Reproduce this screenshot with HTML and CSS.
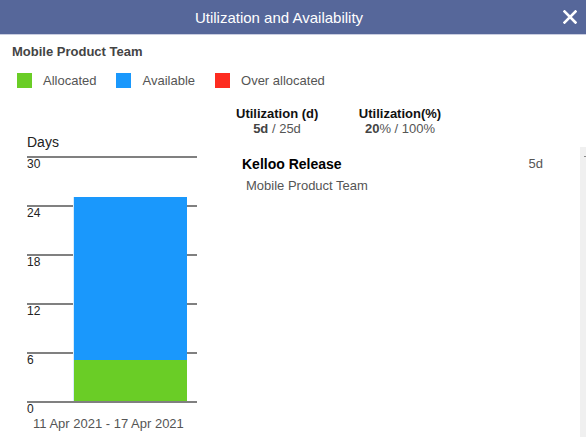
FILE: index.html
```html
<!DOCTYPE html>
<html>
<head>
<meta charset="utf-8">
<link rel="stylesheet" href="styles.css">
</head>
<body>
<div class="dialog">
  <div class="header">
    <div class="title">Utilization and Availability</div>
    <button class="close" aria-label="Close">
      <svg width="14" height="14" viewBox="0 0 14 14"><path d="M1.5 1.5 L12.5 12.5 M12.5 1.5 L1.5 12.5" stroke="#fff" stroke-width="2.6" stroke-linecap="square" fill="none"/></svg>
    </button>
  </div>
  <div class="content">
    <div class="team">Mobile Product Team</div>
    <div class="legend">
      <div class="legend-item"><span class="swatch green"></span>Allocated</div>
      <div class="legend-item"><span class="swatch blue"></span>Available</div>
      <div class="legend-item"><span class="swatch red"></span>Over allocated</div>
    </div>
    <div class="main">
      <div class="chart-col">
        <div class="days">Days</div>
        <div class="plot">
          <div class="grid">
            <div class="row"><span>30</span></div>
            <div class="row"><span>24</span></div>
            <div class="row"><span>18</span></div>
            <div class="row"><span>12</span></div>
            <div class="row"><span>6</span></div>
            <div class="row last"><span>0</span></div>
          </div>
          <div class="bars">
            <div class="bar">
              <div class="seg blue" style="height:163px"></div>
              <div class="seg green" style="height:41px"></div>
            </div>
          </div>
        </div>
        <div class="date">11 Apr 2021 - 17 Apr 2021</div>
      </div>
      <div class="info-col">
        <div class="stats">
          <div class="stat stat-d">
            <div class="stat-title">Utilization (d)</div>
            <div class="stat-val"><b>5d</b> / 25d</div>
          </div>
          <div class="stat stat-p">
            <div class="stat-title">Utilization(%)</div>
            <div class="stat-val"><b>20</b>% / 100%</div>
          </div>
        </div>
        <div class="list-wrap">
          <div class="list">
            <div class="item">
              <div class="item-top"><span class="item-name">Kelloo Release</span><span class="item-days">5d</span></div>
              <div class="item-team">Mobile Product Team</div>
            </div>
          </div>
          <div class="scrollbar"><span class="arrow"></span><span class="arrow"></span></div>
        </div>
      </div>
    </div>
  </div>
</div>
</body>
</html>
```

FILE: styles.css
```css
* { box-sizing: border-box; }
html, body { margin: 0; padding: 0; background: #fff; }
body { font-family: "Liberation Sans", Arial, sans-serif; width: 586px; height: 437px; overflow: hidden; }

.header {
  height: 35px;
  background: #56679a;
  border-bottom: 1px solid #c9cde0;
  display: flex;
  align-items: center;
}
.title { flex: 1; text-align: center; color: #fff; font-size: 15px; padding-top: 1px; }
.close {
  background: none; border: 0; padding: 0;
  width: 14px; height: 14px;
  margin: 0 9px 0 5px;
  display: flex;
}

.content { padding: 9px 0 0 12px; }
.team { font-weight: bold; font-size: 13px; color: #444; height: 16px; }
.legend { display: flex; margin-top: 12px; margin-left: 5px; height: 16px; align-items: center; }
.legend-item { display: flex; align-items: center; font-size: 13px; color: #555; margin-right: 20px; }
.swatch { width: 15px; height: 15px; margin-right: 11px; display: inline-block; }
.green { background: #6acd26; }
.blue { background: #1a98fc; }
.red { background: #fd2c20; }

.main { display: flex; }
.chart-col { width: 218px; padding-left: 15px; padding-top: 46px; }
.days { font-size: 14px; color: #222; height: 20px; }
.plot { display: grid; width: 170px; margin-top: 2px; }
.grid, .bars { grid-area: 1 / 1; }
.row { height: 49px; border-top: 2px solid #808080; font-size: 12px; color: #222; line-height: 13px; }
.row.last { height: 14px; }
.bars { display: flex; align-items: flex-start; padding-left: 46px; padding-top: 41px; }
.bar { width: 114px; display: flex; flex-direction: column; border-left: 1px solid #d6ecfb; }
.seg { width: 100%; }
.date { font-size: 13px; color: #555; margin-left: 6px; margin-top: 1px; }

.info-col { flex: 1; padding-top: 18px; }
.stats { display: flex; margin-left: 6px; }
.stat { text-align: center; font-size: 13px; white-space: nowrap; }
.stat-title { font-weight: bold; color: #111; }
.stat-val { color: #555; margin-top: 0; }
.stat-val b { color: #444; }
.stat-d { width: 82px; }
.stat-p { width: 84px; margin-left: 40px; }
.list-wrap { display: flex; margin-top: 11px; height: 300px; }
.list { flex: 1; padding-left: 12px; padding-top: 9px; }
.item-top { display: flex; justify-content: space-between; padding-right: 37px; }
.item-name { font-weight: bold; font-size: 14px; color: #000; }
.item-days { font-size: 13px; color: #555; }
.item-team { font-size: 13px; color: #555; margin-top: 6px; margin-left: 4px; }
.scrollbar { width: 6px; background: #f0f0f0; display: flex; flex-direction: column; justify-content: space-between; padding: 9px 0 9px 4px; }
.arrow { width: 2px; height: 1px; background: #888; }
```
